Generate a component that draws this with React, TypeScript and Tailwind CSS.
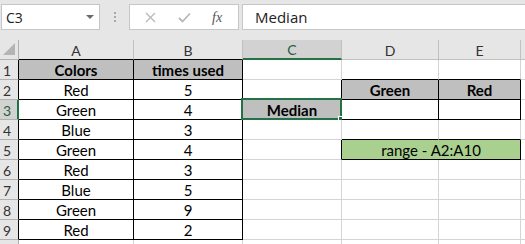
import React from "react";

type C = {
  text?: string;
  bold?: boolean;
  fill?: string;
  r?: boolean; // black right border
  b?: boolean; // black bottom border
  span?: boolean;
};

const COLS = ["A", "B", "C", "D", "E"];

const DATA: [string, string][] = [
  ["Red", "5"],
  ["Green", "4"],
  ["Blue", "3"],
  ["Green", "4"],
  ["Red", "3"],
  ["Blue", "5"],
  ["Green", "9"],
  ["Red", "2"],
];

function rowCells(row: number): C[] {
  const a: C = { r: row <= 9, b: row <= 9 };
  const bcell: C = { r: row <= 9, b: row <= 9 };
  if (row === 1) {
    a.text = "Colors";
    a.bold = true;
    a.fill = "gray";
    bcell.text = "times used";
    bcell.bold = true;
    bcell.fill = "gray";
  } else if (row <= 9) {
    a.text = DATA[row - 2][0];
    bcell.text = DATA[row - 2][1];
  }
  const c: C = { r: row === 2 || row === 3 || row === 5 };
  const d: C = { r: row === 2 || row === 3, b: row === 1 || row === 2 || row === 3 || row === 4 };
  const e: C = { r: row === 2 || row === 3, b: row === 1 || row === 2 || row === 3 || row === 4 };
  if (row === 2) {
    d.text = "Green";
    d.bold = true;
    d.fill = "gray";
    e.text = "Red";
    e.bold = true;
    e.fill = "gray";
  }
  if (row === 3) {
    c.text = "Median";
    c.bold = true;
    c.fill = "gray";
  }
  if (row === 5) {
    const m: C = { text: "range - A2:A10", fill: "green", r: true, b: true, span: true };
    return [a, bcell, c, m];
  }
  return [a, bcell, c, d, e];
}

function Cell({ cell, selected }: { cell: C; selected?: boolean }) {
  const cls = [
    "relative flex items-center justify-center border-r border-b text-[15px] leading-none text-black",
    cell.r ? "border-r-black" : "border-r-[#d4d4d4]",
    cell.b ? "border-b-black" : "border-b-[#d4d4d4]",
    cell.bold ? "font-bold" : "",
    cell.fill === "gray" ? "bg-[#bfbfbf]" : cell.fill === "green" ? "bg-[#a9d08e]" : "bg-white",
    cell.span ? "col-span-2" : "",
  ].join(" ");
  return (
    <div className={cls}>
      <span className="pt-[2px]">{cell.text}</span>
      {selected && (
        <div className="pointer-events-none absolute -left-[2px] -top-[2px] -right-[1px] -bottom-[1px] border-2 border-[#217346]">
          <div className="absolute -right-[4px] -bottom-[4px] h-[6px] w-[6px] border border-white bg-[#217346]" />
        </div>
      )}
    </div>
  );
}

function FormulaBar() {
  return (
    <div className="flex h-[40px] items-start bg-[#e6e6e6] pt-[4px]" style={{ fontFamily: '"Open Sans", "Noto Sans", sans-serif' }}>
      <div className="ml-[1px] flex h-[26px] w-[99px] items-center justify-between border border-[#c6c6c6] bg-white pl-[4px] pr-[5px] text-[14px] text-[#222]">
        <span>C3</span>
        <span className="h-0 w-0 border-x-[4px] border-t-[4px] border-x-transparent border-t-[#6a6a6a]" />
      </div>
      <div className="ml-[14px] mr-[13px] mt-[8px] flex flex-col gap-[2px]">
        <span className="h-[2px] w-[2px] bg-[#a8a8a8]" />
        <span className="h-[2px] w-[2px] bg-[#a8a8a8]" />
        <span className="h-[2px] w-[2px] bg-[#a8a8a8]" />
      </div>
      <div className="flex h-[26px] w-[110px] items-center border border-[#c6c6c6] bg-white">
        <svg width="11" height="11" viewBox="0 0 11 11" className="ml-[15px]">
          <path d="M1 1 L10 10 M10 1 L1 10" stroke="#b8b8b8" strokeWidth="1.3" />
        </svg>
        <svg width="13" height="11" viewBox="0 0 13 11" className="ml-[22px]">
          <path d="M1 6 L4.5 9.5 L12 1.5" stroke="#b8b8b8" strokeWidth="1.8" fill="none" />
        </svg>
        <span className="ml-[21px] text-[14px] italic text-[#555]" style={{ fontFamily: '"Liberation Serif", serif' }}>
          fx
        </span>
      </div>
      <div className="ml-[3px] flex h-[26px] flex-1 items-center border border-r-0 border-[#c6c6c6] bg-white pl-[12px] text-[15px] text-[#222]">
        Median
      </div>
    </div>
  );
}

export default function App() {
  const rows = Array.from({ length: 10 }, (_, i) => i + 1);
  return (
    <div className="h-[244px] w-[525px] overflow-hidden bg-white" style={{ fontFamily: "Lato, Carlito, sans-serif" }}>
      <FormulaBar />
      <div className="grid grid-cols-[19px_115px_109px_99px_97px_82px_1fr] auto-rows-[20px]">
        {/* corner + column headers */}
        <div className="relative border-r border-b border-r-[#b0b0b0] border-b-[#b0b0b0] bg-[#e6e6e6]">
          <svg width="13" height="13" className="absolute bottom-[3px] right-[2px]">
            <path d="M12 0 L12 12 L0 12 Z" fill="#b4b4b4" />
          </svg>
        </div>
        {COLS.map((c) => (
          <div
            key={c}
            className={[
              "flex items-center justify-center border-r border-r-[#c0c0c0] text-[14px]",
              c === "C" ? "border-b-2 border-b-[#217346] bg-[#d2d2d2] text-[#1e5e3a]" : "border-b bg-[#e6e6e6] text-[#333]",
              c === "A" || c === "B" ? "border-b-black" : c === "C" ? "" : "border-b-[#c0c0c0]",
            ].join(" ")}
          >
            <span className="pt-[1px]">{c}</span>
          </div>
        ))}
        <div className="border-b border-b-[#c0c0c0] bg-[#e6e6e6]" />

        {rows.map((r) => {
          const cells = rowCells(r);
          return (
            <React.Fragment key={r}>
              <div
                className={[
                  "flex items-center pl-[3px] text-[14px]",
                  r === 3
                    ? "border-r-2 border-b border-r-[#217346] border-b-[#b0b0b0] bg-[#d2d2d2] text-[#1e5e3a]"
                    : "border-r border-b border-b-[#b0b0b0] bg-[#e6e6e6] text-[#333]",
                  r !== 3 && r <= 9 ? "border-r-black" : r !== 3 ? "border-r-[#b0b0b0]" : "",
                ].join(" ")}
              >
                {r <= 9 && <span className="pt-[1px]">{r}</span>}
              </div>
              {cells.map((cell, i) => (
                <Cell key={i} cell={cell} selected={r === 3 && i === 2} />
              ))}
              <div className="border-b border-b-[#d4d4d4] bg-white" />
            </React.Fragment>
          );
        })}
      </div>
    </div>
  );
}
